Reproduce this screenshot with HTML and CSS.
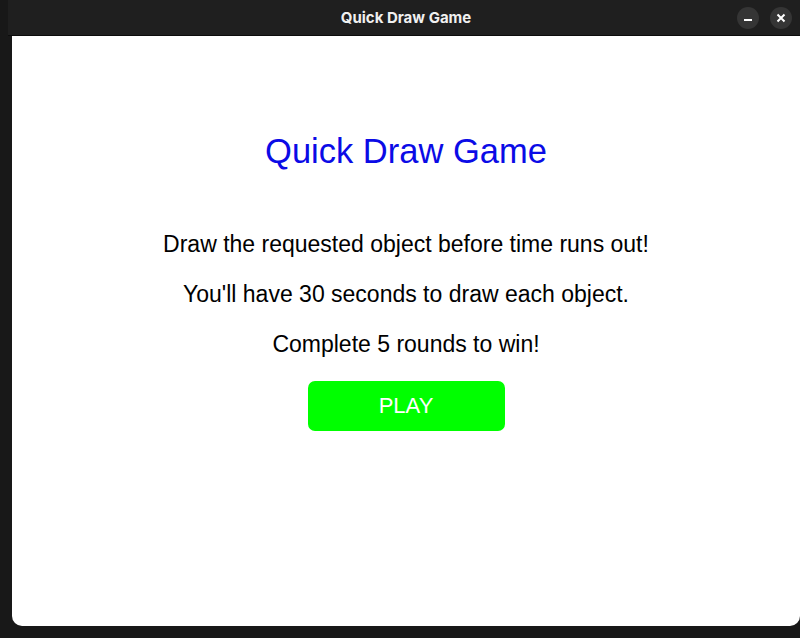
FILE: index.html
```html
<!DOCTYPE html>
<html>
<head>
<meta charset="utf-8">
<link rel="stylesheet" href="styles.css">
</head>
<body>
<div class="window">
  <div class="titlebar">
    <div class="title">Quick Draw Game</div>
    <div class="controls">
      <span class="ctl"><svg width="10" height="10" viewBox="0 0 10 10"><rect x="1" y="6" width="8" height="2" fill="#fff"/></svg></span>
      <span class="ctl"><svg width="10" height="10" viewBox="0 0 10 10"><path d="M1.5 1.5 L8.5 8.5 M8.5 1.5 L1.5 8.5" stroke="#fff" stroke-width="2"/></svg></span>
    </div>
  </div>
  <div class="content">
    <h1 class="heading">Quick Draw Game</h1>
    <p class="line l1">Draw the requested object before time runs out!</p>
    <p class="line l2">You'll have 30 seconds to draw each object.</p>
    <p class="line l3">Complete 5 rounds to win!</p>
    <div class="play">PLAY</div>
  </div>
</div>
</body>
</html>
```
FILE: styles.css
```css
html, body {
  margin: 0;
  padding: 0;
  width: 800px;
  height: 638px;
  background: #181818;
  overflow: hidden;
}
.window {
  margin-left: 8px;
  width: 792px;
  display: flex;
  flex-direction: column;
}
.titlebar {
  height: 35px;
  background: #1f1f1f;
  border-bottom: 1px solid #0c0c0c;
  position: relative;
  display: flex;
  align-items: center;
  justify-content: center;
}
.title {
  font-family: "Inter", "Open Sans", sans-serif;
  font-weight: 700;
  font-size: 15px;
  color: #f0f0f0;
  margin-left: 4px;
}
.controls {
  position: absolute;
  right: 8px;
  top: 7px;
  display: flex;
  gap: 11px;
}
.ctl {
  width: 22px;
  height: 22px;
  border-radius: 50%;
  background: #353535;
  display: flex;
  align-items: center;
  justify-content: center;
}
.content {
  margin-left: 4px;
  height: 590px;
  background: #ffffff;
  border-radius: 0 0 10px 10px;
  display: flex;
  flex-direction: column;
  align-items: center;
  font-family: "Liberation Sans", Arial, sans-serif;
}
.heading {
  margin: 95px 0 0 0;
  font-weight: 400;
  font-size: 34.5px;
  line-height: 40px;
  color: #0b0be6;
}
.line {
  margin: 0;
  font-size: 23px;
  line-height: 27px;
  color: #000;
}
.line.l1 { margin-top: 60px; }
.line.l2 { margin-top: 23px; }
.line.l3 { margin-top: 23px; }
.play {
  margin-top: 23px;
  width: 197px;
  height: 50px;
  background: #00ff00;
  border-radius: 7px;
  color: #ffffff;
  font-size: 22px;
  display: flex;
  align-items: center;
  justify-content: center;
}
```
